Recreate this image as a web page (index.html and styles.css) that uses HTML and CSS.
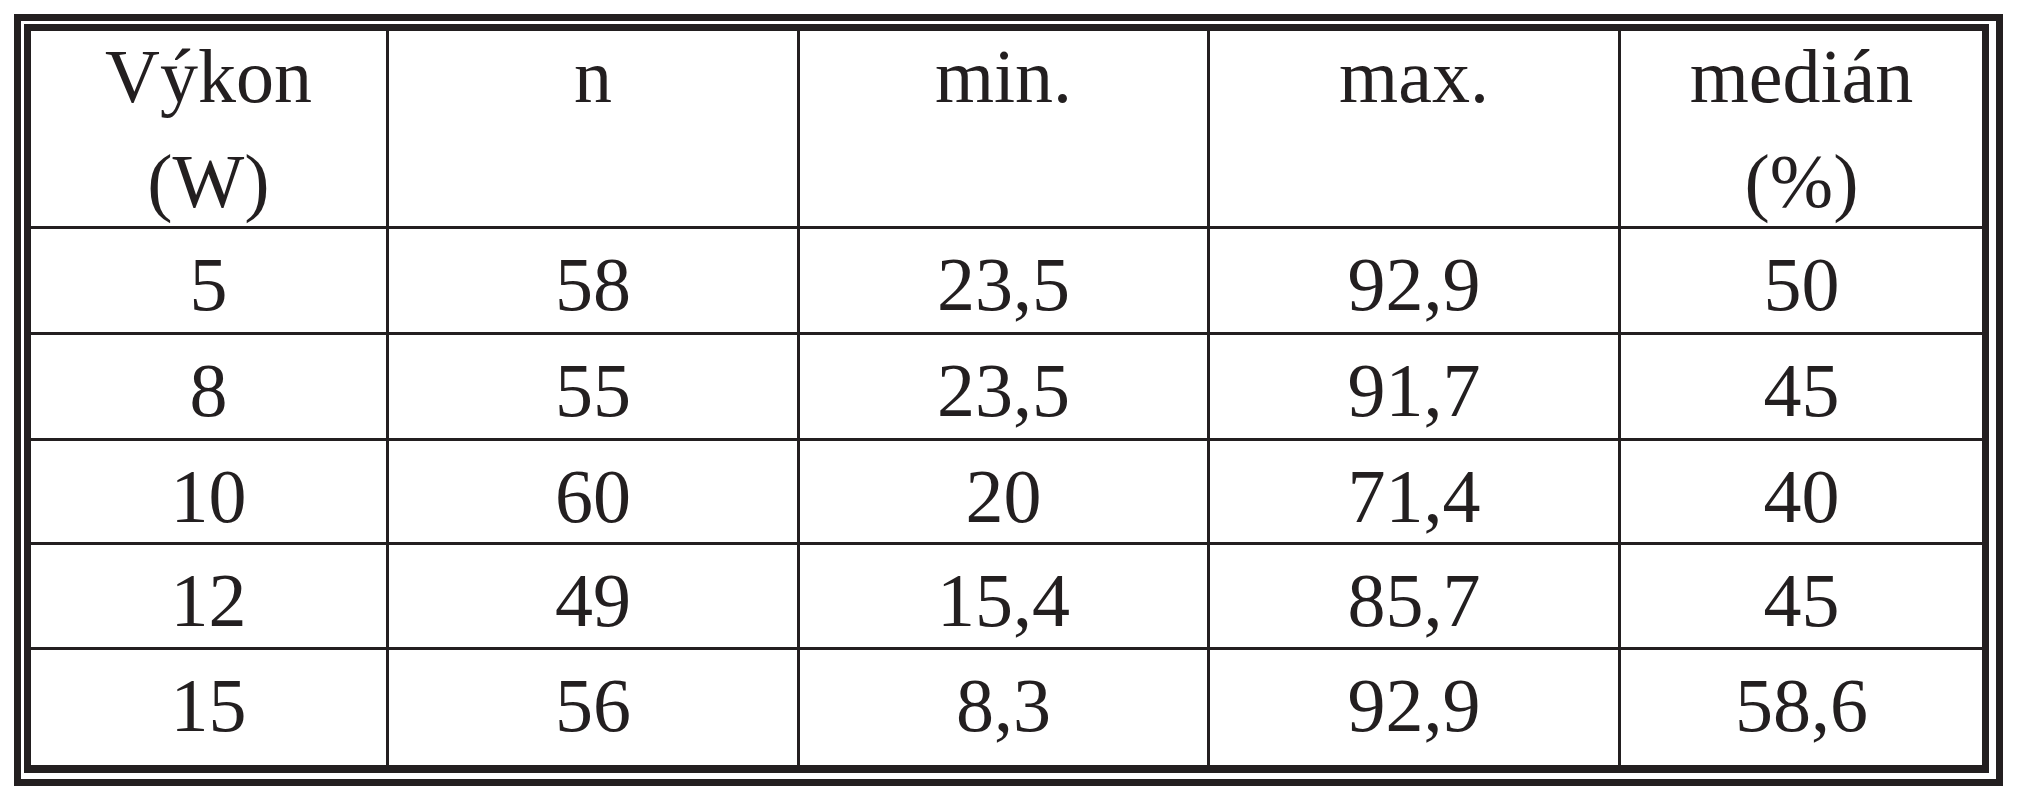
FILE: index.html
```html
<!DOCTYPE html>
<html lang="cs">
<head>
<meta charset="utf-8">
<title>Výkon</title>
<link rel="stylesheet" href="styles.css">
</head>
<body>
<div class="frame">
  <div class="box">
    <div class="grid">
      <div class="cell head"><div class="txt">Výkon<br>(W)</div></div>
      <div class="cell head"><div class="txt">n</div></div>
      <div class="cell head"><div class="txt">min.</div></div>
      <div class="cell head"><div class="txt">max.</div></div>
      <div class="cell head"><div class="txt">medián<br>(%)</div></div>

      <div class="cell">5</div><div class="cell">58</div><div class="cell">23,5</div><div class="cell">92,9</div><div class="cell">50</div>
      <div class="cell">8</div><div class="cell">55</div><div class="cell">23,5</div><div class="cell">91,7</div><div class="cell">45</div>
      <div class="cell">10</div><div class="cell">60</div><div class="cell">20</div><div class="cell">71,4</div><div class="cell">40</div>
      <div class="cell">12</div><div class="cell">49</div><div class="cell">15,4</div><div class="cell">85,7</div><div class="cell">45</div>
      <div class="cell">15</div><div class="cell">56</div><div class="cell">8,3</div><div class="cell">92,9</div><div class="cell">58,6</div>
    </div>
  </div>
</div>
</body>
</html>
```

FILE: styles.css
```css
html, body {
  margin: 0;
  padding: 0;
  background: #ffffff;
}

body {
  font-family: "Liberation Serif", "Times New Roman", serif;
  color: #231f20;
}

.frame {
  box-sizing: border-box;
  margin: 14px 0 0 14px;
  width: 1989px;
  height: 772px;
  border: 7px solid #231f20;
  padding: 3px 7px 6px 3px;
}

.box {
  box-sizing: border-box;
  width: 100%;
  height: 100%;
  border: 7px solid #231f20;
  background: #231f20;
}

.grid {
  display: grid;
  grid-template-columns: 355px 408px 407px 408px 361px;
  grid-template-rows: 195px 103px 103px 101px 102px 115px;
  gap: 3px;
  height: 100%;
}

.cell {
  background: #ffffff;
  font-size: 76px;
  line-height: 84px;
  text-align: center;
  padding-top: 13px;
  box-sizing: border-box;
  overflow: visible;
}

.cell.head {
  padding-top: 0;
}

.head .txt {
  line-height: 105px;
  margin-top: -7px;
  position: relative;
}
```
